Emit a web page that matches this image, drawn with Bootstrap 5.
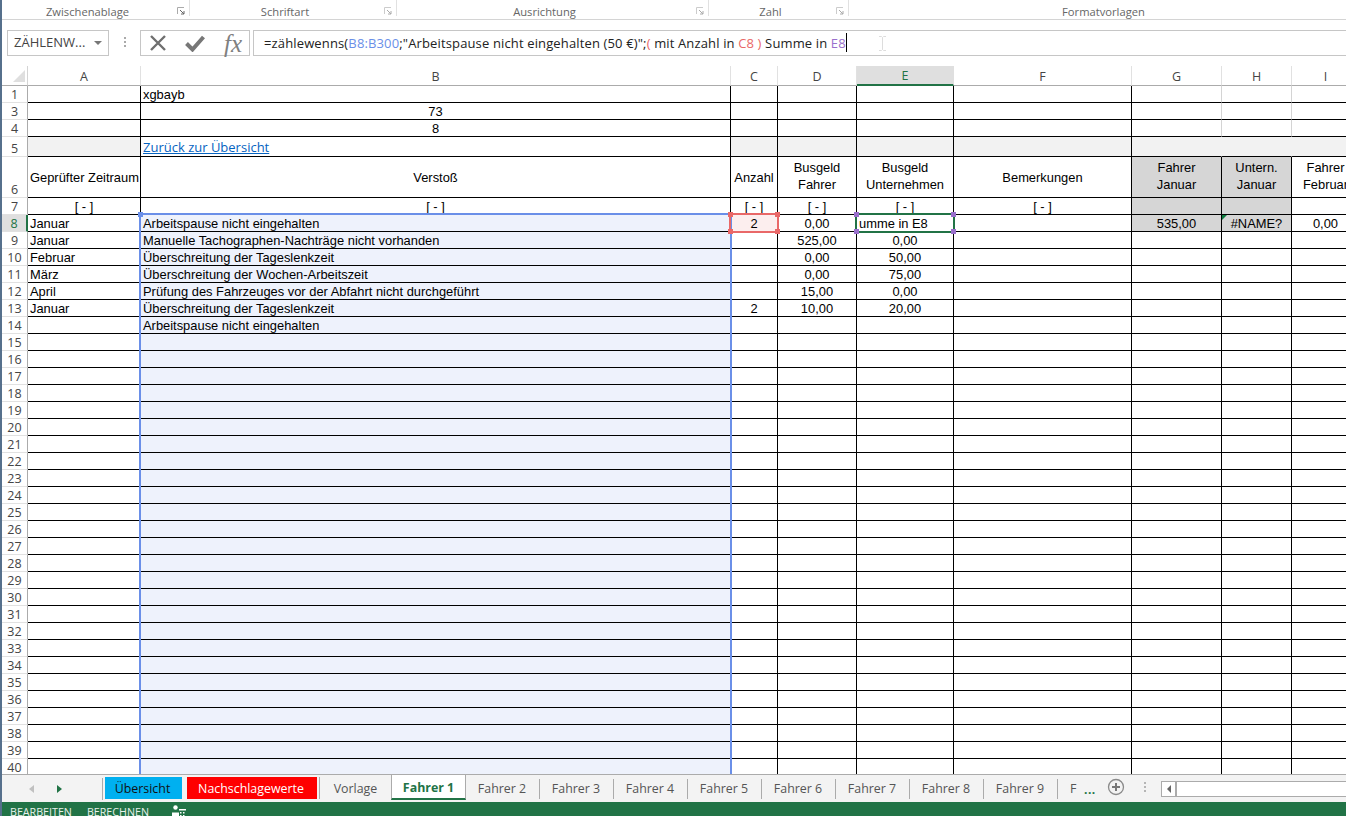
<!DOCTYPE html>
<html lang="de">
<head>
<meta charset="utf-8">
<title>Fahrer 1</title>
<link href="https://cdn.jsdelivr.net/npm/bootstrap@5.3.0/dist/css/bootstrap.min.css" rel="stylesheet">
<style>
html,body{height:816px;overflow:hidden;background:#fff}
.app-root{height:816px;border-left:2px solid #56708c;font-family:"Open Sans","Noto Sans",sans-serif;color:#444}
.ribbon-foot{height:20px;border-bottom:1px solid #d4d4d4;font-size:11.2px;color:#666;line-height:19px;flex:none}
.rib-group{position:relative;text-align:center;height:16px;line-height:24px;padding-right:16px}
.rib-group.sep{border-right:1px solid #e1e1e1}
.rib-launch{position:absolute;right:4px;top:7px;width:8px;height:8px;display:block}
.g1{width:188px}.g2{width:207px}.g3{width:312px}.g4{width:140px}.g5{width:496px;border:0;padding-right:0;padding-left:13px}
.formula-row{height:26px;margin-top:10px;flex:none;font-size:13px;position:relative}
.name-box{width:102px;margin-left:5px;border:1px solid #c6c6c6;padding-left:6px;color:#444}
.name-arrow{width:0;height:0;border-left:4px solid transparent;border-right:4px solid transparent;border-top:4px solid #777;margin-left:auto;margin-right:6px}
.fb-dots{width:31px;color:#aaa}
.fb-dots i{display:block;width:2px;height:2px;background:#aaa;margin:0 auto 2px}
.fb-btns{width:110px;border:1px solid #c6c6c6;padding:0 7px 0 8px}
.fx-txt{font-family:"Liberation Serif",serif;font-style:italic;font-size:25px;line-height:25px;color:#808080}
.fb-input{margin-left:3px;flex:1;border-top:1px solid #c6c6c6;border-bottom:1px solid #c6c6c6;border-left:1px solid #c6c6c6;padding-left:10px;color:#222;white-space:pre;font-size:13px;letter-spacing:.14px}
.f-blue{color:#6a8fe8}.f-red{color:#e96868}.f-purple{color:#9a70cc}
.caret-bar{display:inline-block;width:1px;height:19px;background:#000;vertical-align:-4px}
.ibeam{position:absolute;left:876px;top:6px}
.sheet-wrap{margin-top:10px;flex:1;position:relative;overflow:hidden;min-height:0}
.table.sheet-grid{table-layout:fixed;width:1358px;margin:0;border-collapse:separate;border-spacing:0;font-family:"Liberation Sans",Arial,sans-serif;font-size:12.9px;color:#000;--bs-table-color:#000}
.table.sheet-grid td,.table.sheet-grid th{padding:2px 2px 0;height:17px;line-height:14px;border:0;border-right:1px solid #000;border-bottom:1px solid #000;white-space:nowrap;overflow:hidden;vertical-align:middle;font-weight:400;box-shadow:none}
.table.sheet-grid td:nth-child(n+4){text-align:center}
.table.sheet-grid td.txt-c{text-align:center}
.table.sheet-grid tr>.rh{font-family:"Open Sans","Noto Sans",sans-serif;font-size:12.5px;color:#444;text-align:center;border-right:1px solid #ababab;border-bottom:1px solid #e1e1e1;padding:2px 0 0;vertical-align:bottom;line-height:14px}
.table.sheet-grid tr>.rh.active-row{background:#dfdfdf;color:#217346;border-right:2px solid #217346}
.table.sheet-grid thead th{height:20px;font-family:"Open Sans","Noto Sans",sans-serif;font-size:12.5px;color:#444;text-align:center;border-right:1px solid #e1e1e1;border-bottom:1px solid #ababab;padding:2px 0 0;vertical-align:middle}
.table.sheet-grid thead th.active-col{background:#dfdfdf;color:#217346;border-bottom:2px solid #217346;border-right-color:#dfdfdf}
.table.sheet-grid thead th.corner{padding:0;position:relative}
.table.sheet-grid thead th.to-a{border-right-color:#d4d4d4}
.corner svg{position:absolute;left:11px;top:4px}
.c-rh{width:26px}.c-a{width:113px}.c-b{width:590px}.c-c{width:47px}.c-d{width:79px}.c-e{width:97px}.c-f{width:178px}.c-g{width:90px}.c-h{width:70px}.c-i{width:68px}
.table.sheet-grid .lite{border-right-color:#d4d4d4}
.table.sheet-grid .plain{border-right-color:#f2f2f2}
.table.sheet-grid .gr5{background:#f2f2f2}
.table.sheet-grid .gr{background:#d6d6d6}
.table.sheet-grid .sel{background:#eef2fc}
.table.sheet-grid .red-cell{background:#fceeee}
.table.sheet-grid .tall-row{height:41px;line-height:17px;padding:0 2px}
.table.sheet-grid .two-line{padding:0 2px 2px}
.table.sheet-grid tr>.rh.tall-row{line-height:14px;padding:0}
.table.sheet-grid .mid-row{height:20px}
.table.sheet-grid .bot{vertical-align:bottom}
.sheet-link{color:#0563c1;text-decoration:underline;font-family:"Open Sans","Noto Sans",sans-serif;font-size:13px}
.err-mark{position:relative}
.err-mark::before{content:"";position:absolute;left:0;top:0;border-top:5px solid #107c41;border-right:5px solid transparent}
.range{position:absolute;pointer-events:none;border:2px solid}
.range-b{left:137px;top:147px;width:593px;height:600px;border-color:#6a8fe8}
.range-c{left:727px;top:147px;width:50px;height:20px;border-color:#e96868}
.range-e{left:853px;top:147px;width:100px;height:20px;border-color:#217346}
.grip{position:absolute;width:5px;height:5px}
.grip-blue{background:#6a8fe8;left:136px;top:146px}
.grip-red{background:#e96868}
.grip-pur{background:#9a70cc}
.tab-strip{height:28px;background:#f3f3f3;border-top:1px solid #ababab;flex:none;font-size:12.4px;position:relative;color:#555}
.tab-nav{width:101px;padding-left:27px;height:22px;border-right:1px solid #ababab;margin-top:3px;gap:23px}
.tri-l{width:0;height:0;border-top:4px solid transparent;border-bottom:4px solid transparent;border-right:5px solid #c0c0c0}
.tri-r{width:0;height:0;border-top:4px solid transparent;border-bottom:4px solid transparent;border-left:5px solid #217346}
.nav.sheet-tabs{flex-wrap:nowrap;align-items:flex-start;height:25px}
.nav.sheet-tabs .nav-link{padding:0;height:22px;margin-top:2px;line-height:23px;text-align:center;color:#555;font-size:12.4px}
.nav.sheet-tabs .tabw{width:74px;position:relative;padding-right:2px}
.nav.sheet-tabs .tabw::after{content:"";position:absolute;right:0;top:2px;height:20px;width:1px;background:#ababab}
.nav.sheet-tabs .tab-blue{width:77px;margin-left:2px;background:#00b0f0;color:#111;padding-right:2px}
.nav.sheet-tabs .tab-red{width:130px;margin-left:5px;background:#f00;color:#fff;padding-right:2px}
.nav.sheet-tabs .tab-vor{width:72px;margin-left:2px;border-left:1px solid #ababab}
.nav.sheet-tabs .tab-on{width:75px;margin-top:0;height:25px;background:#fff;color:#217346;font-weight:700;border-left:1px solid #ababab;border-right:1px solid #ababab;border-bottom:2px solid #217346;line-height:26px}
.nav.sheet-tabs .tab-on::after{display:none}
.nav.sheet-tabs .tab-cut{width:24px;text-align:left;padding-left:12px;overflow:hidden}
.more-dots{color:#217346;font-weight:700;font-size:12px;width:24px;margin-left:2px;line-height:22px;height:22px;letter-spacing:.5px}
.add-sheet{margin-left:-1px;margin-top:3px;flex:none}
.strip-dots{width:3px;margin-left:19px;margin-top:7px}
.strip-dots i{display:block;width:2px;height:2px;background:#b5b5b5;margin-bottom:2px}
.scroll-bar{margin-left:14px;margin-top:6px;flex:1;height:16px;border:1px solid #ababab;border-right:0;background:#fff}
.scroll-arrow{width:15px;height:14px;border-right:2px solid #ababab;display:flex;align-items:center;justify-content:center}
.scroll-arrow i{width:0;height:0;border-top:4px solid transparent;border-bottom:4px solid transparent;border-right:4px solid #666}
.status-line{height:14px;background:#217346;color:#e9f1ec;font-size:10.7px;flex:none;padding-left:8px;gap:15px;line-height:14px;padding-top:3px;overflow:hidden}
</style>
</head>
<body>
<div class="app-root d-flex flex-column position-relative">
  <div class="ribbon-foot d-flex">
    <div class="rib-group sep g1">Zwischenablage<svg class="rib-launch" viewBox="0 0 8 8"><path d="M0.5 7V.5H7" fill="none" stroke="#aaa"/><path d="M3 3l4 4M7 4v3H4" fill="none" stroke="#666"/></svg></div>
    <div class="rib-group sep g2">Schriftart<svg class="rib-launch" viewBox="0 0 8 8"><path d="M0.5 7V.5H7" fill="none" stroke="#ccc"/><path d="M3 3l4 4M7 4v3H4" fill="none" stroke="#aaa"/></svg></div>
    <div class="rib-group sep g3">Ausrichtung<svg class="rib-launch" viewBox="0 0 8 8"><path d="M0.5 7V.5H7" fill="none" stroke="#ccc"/><path d="M3 3l4 4M7 4v3H4" fill="none" stroke="#aaa"/></svg></div>
    <div class="rib-group sep g4">Zahl<svg class="rib-launch" viewBox="0 0 8 8"><path d="M0.5 7V.5H7" fill="none" stroke="#ccc"/><path d="M3 3l4 4M7 4v3H4" fill="none" stroke="#aaa"/></svg></div>
    <div class="rib-group g5">Formatvorlagen</div>
  </div>
  <div class="formula-row d-flex">
    <div class="name-box d-flex align-items-center">ZÄHLENW...<span class="name-arrow"></span></div>
    <div class="fb-dots d-flex flex-column justify-content-center"><i></i><i></i><i></i></div>
    <div class="fb-btns d-flex align-items-center justify-content-between">
      <svg width="18" height="18" viewBox="0 0 18 18"><path d="M2 2l14 14M16 2L2 16" stroke="#6f6f6f" stroke-width="2.4" fill="none"/></svg>
      <svg width="20" height="18" viewBox="0 0 20 18"><path d="M1.5 9.5l6 6L18.5 3" stroke="#777" stroke-width="4" fill="none"/></svg>
      <span class="fx-txt">fx</span>
    </div>
    <div class="fb-input d-flex align-items-center"><span>=zählewenns(<span class="f-blue">B8:B300</span>;"Arbeitspause nicht eingehalten (50 €)";<span class="f-red">(</span> mit Anzahl in <span class="f-red">C8 )</span> Summe in <span class="f-purple">E8</span><span class="caret-bar"></span></span></div>
    <svg class="ibeam" width="9" height="15" viewBox="0 0 9 15"><path d="M1 .5h2.5L4.5 1.5 5.5.5H8M4.5 1.5v12M1 14.5h2.5l1-1 1 1H8" fill="none" stroke="#ddd"/></svg>
  </div>
  <div class="sheet-wrap">
    <table class="table sheet-grid">
      <colgroup><col class="c-rh"><col class="c-a"><col class="c-b"><col class="c-c"><col class="c-d"><col class="c-e"><col class="c-f"><col class="c-g"><col class="c-h"><col class="c-i"></colgroup>
      <thead><tr><th class="corner to-a"><svg width="12" height="12" viewBox="0 0 12 12"><path d="M12 0V12H0Z" fill="#dfdfdf"/></svg></th><th>A</th><th>B</th><th>C</th><th>D</th><th class="active-col">E</th><th>F</th><th>G</th><th>H</th><th>I</th></tr></thead>
      <tbody>
      <tr><td class="rh">1</td><td></td><td>xgbayb</td><td></td><td></td><td></td><td></td><td class="lite"></td><td class="lite"></td><td></td></tr>
      <tr><td class="rh">3</td><td></td><td class="txt-c">73</td><td></td><td></td><td></td><td></td><td class="lite"></td><td class="lite"></td><td></td></tr>
      <tr><td class="rh">4</td><td></td><td class="txt-c">8</td><td></td><td></td><td></td><td></td><td class="lite"></td><td class="lite"></td><td></td></tr>
      <tr><td class="rh mid-row">5</td><td class="gr5 mid-row"></td><td class="mid-row"><a class="sheet-link" href="#">Zurück zur Übersicht</a></td><td class="gr5 mid-row"></td><td class="gr5 mid-row"></td><td class="gr5 mid-row"></td><td class="gr5 mid-row"></td><td class="gr5 mid-row plain"></td><td class="gr5 mid-row plain"></td><td class="gr5 mid-row"></td></tr>
      <tr><td class="rh tall-row">6</td><td class="tall-row">Geprüfter Zeitraum</td><td class="tall-row txt-c">Verstoß</td><td class="tall-row">Anzahl</td><td class="tall-row two-line">Busgeld<br>Fahrer</td><td class="tall-row two-line">Busgeld<br>Unternehmen</td><td class="tall-row">Bemerkungen</td><td class="tall-row two-line gr">Fahrer<br>Januar</td><td class="tall-row two-line gr">Untern.<br>Januar</td><td class="tall-row two-line">Fahrer<br>Februar</td></tr>
      <tr><td class="rh">7</td><td class="txt-c bot">[ - ]</td><td class="txt-c bot">[ - ]</td><td class="bot">[ - ]</td><td class="bot">[ - ]</td><td class="bot">[ - ]</td><td class="bot">[ - ]</td><td class="gr"></td><td class="gr"></td><td></td></tr>
      <tr><td class="rh active-row">8</td><td>Januar</td><td class="sel">Arbeitspause nicht eingehalten</td><td class="red-cell">2</td><td>0,00</td><td class="text-start">umme in E8</td><td></td><td class="gr">535,00</td><td class="gr err-mark">#NAME?</td><td>0,00</td></tr>
      <tr><td class="rh">9</td><td>Januar</td><td class="sel">Manuelle Tachographen-Nachträge nicht vorhanden</td><td></td><td>525,00</td><td>0,00</td><td></td><td></td><td></td><td></td></tr>
      <tr><td class="rh">10</td><td>Februar</td><td class="sel">Überschreitung der Tageslenkzeit</td><td></td><td>0,00</td><td>50,00</td><td></td><td></td><td></td><td></td></tr>
      <tr><td class="rh">11</td><td>März</td><td class="sel">Überschreitung der Wochen-Arbeitszeit</td><td></td><td>0,00</td><td>75,00</td><td></td><td></td><td></td><td></td></tr>
      <tr><td class="rh">12</td><td>April</td><td class="sel">Prüfung des Fahrzeuges vor der Abfahrt nicht durchgeführt</td><td></td><td>15,00</td><td>0,00</td><td></td><td></td><td></td><td></td></tr>
      <tr><td class="rh">13</td><td>Januar</td><td class="sel">Überschreitung der Tageslenkzeit</td><td>2</td><td>10,00</td><td>20,00</td><td></td><td></td><td></td><td></td></tr>
      <tr><td class="rh">14</td><td></td><td class="sel">Arbeitspause nicht eingehalten</td><td></td><td></td><td></td><td></td><td></td><td></td><td></td></tr>
      <tr><td class="rh">15</td><td></td><td class="sel"></td><td></td><td></td><td></td><td></td><td></td><td></td><td></td></tr>
      <tr><td class="rh">16</td><td></td><td class="sel"></td><td></td><td></td><td></td><td></td><td></td><td></td><td></td></tr>
      <tr><td class="rh">17</td><td></td><td class="sel"></td><td></td><td></td><td></td><td></td><td></td><td></td><td></td></tr>
      <tr><td class="rh">18</td><td></td><td class="sel"></td><td></td><td></td><td></td><td></td><td></td><td></td><td></td></tr>
      <tr><td class="rh">19</td><td></td><td class="sel"></td><td></td><td></td><td></td><td></td><td></td><td></td><td></td></tr>
      <tr><td class="rh">20</td><td></td><td class="sel"></td><td></td><td></td><td></td><td></td><td></td><td></td><td></td></tr>
      <tr><td class="rh">21</td><td></td><td class="sel"></td><td></td><td></td><td></td><td></td><td></td><td></td><td></td></tr>
      <tr><td class="rh">22</td><td></td><td class="sel"></td><td></td><td></td><td></td><td></td><td></td><td></td><td></td></tr>
      <tr><td class="rh">23</td><td></td><td class="sel"></td><td></td><td></td><td></td><td></td><td></td><td></td><td></td></tr>
      <tr><td class="rh">24</td><td></td><td class="sel"></td><td></td><td></td><td></td><td></td><td></td><td></td><td></td></tr>
      <tr><td class="rh">25</td><td></td><td class="sel"></td><td></td><td></td><td></td><td></td><td></td><td></td><td></td></tr>
      <tr><td class="rh">26</td><td></td><td class="sel"></td><td></td><td></td><td></td><td></td><td></td><td></td><td></td></tr>
      <tr><td class="rh">27</td><td></td><td class="sel"></td><td></td><td></td><td></td><td></td><td></td><td></td><td></td></tr>
      <tr><td class="rh">28</td><td></td><td class="sel"></td><td></td><td></td><td></td><td></td><td></td><td></td><td></td></tr>
      <tr><td class="rh">29</td><td></td><td class="sel"></td><td></td><td></td><td></td><td></td><td></td><td></td><td></td></tr>
      <tr><td class="rh">30</td><td></td><td class="sel"></td><td></td><td></td><td></td><td></td><td></td><td></td><td></td></tr>
      <tr><td class="rh">31</td><td></td><td class="sel"></td><td></td><td></td><td></td><td></td><td></td><td></td><td></td></tr>
      <tr><td class="rh">32</td><td></td><td class="sel"></td><td></td><td></td><td></td><td></td><td></td><td></td><td></td></tr>
      <tr><td class="rh">33</td><td></td><td class="sel"></td><td></td><td></td><td></td><td></td><td></td><td></td><td></td></tr>
      <tr><td class="rh">34</td><td></td><td class="sel"></td><td></td><td></td><td></td><td></td><td></td><td></td><td></td></tr>
      <tr><td class="rh">35</td><td></td><td class="sel"></td><td></td><td></td><td></td><td></td><td></td><td></td><td></td></tr>
      <tr><td class="rh">36</td><td></td><td class="sel"></td><td></td><td></td><td></td><td></td><td></td><td></td><td></td></tr>
      <tr><td class="rh">37</td><td></td><td class="sel"></td><td></td><td></td><td></td><td></td><td></td><td></td><td></td></tr>
      <tr><td class="rh">38</td><td></td><td class="sel"></td><td></td><td></td><td></td><td></td><td></td><td></td><td></td></tr>
      <tr><td class="rh">39</td><td></td><td class="sel"></td><td></td><td></td><td></td><td></td><td></td><td></td><td></td></tr>
      <tr><td class="rh">40</td><td></td><td class="sel"></td><td></td><td></td><td></td><td></td><td></td><td></td><td></td></tr>
      </tbody>
    </table>
    <div class="range range-b"></div>
    <div class="range range-c"></div>
    <div class="range range-e"></div>
    <div class="grip grip-blue"></div>
    <div class="grip grip-red" style="left:726px;top:146px"></div>
    <div class="grip grip-red" style="left:773px;top:146px"></div>
    <div class="grip grip-red" style="left:726px;top:163px"></div>
    <div class="grip grip-red" style="left:773px;top:163px"></div>
    <div class="grip grip-pur" style="left:852px;top:146px"></div>
    <div class="grip grip-pur" style="left:949px;top:146px"></div>
    <div class="grip grip-pur" style="left:852px;top:163px"></div>
    <div class="grip grip-pur" style="left:949px;top:163px"></div>
  </div>
  <div class="tab-strip d-flex">
    <div class="tab-nav d-flex align-items-center"><span class="tri-l"></span><span class="tri-r"></span></div>
    <ul class="nav sheet-tabs">
      <li class="nav-item"><a class="nav-link tab-blue" href="#">Übersicht</a></li>
      <li class="nav-item"><a class="nav-link tab-red" href="#">Nachschlagewerte</a></li>
      <li class="nav-item"><a class="nav-link tab-vor" href="#">Vorlage</a></li>
      <li class="nav-item"><a class="nav-link tab-on" href="#">Fahrer 1</a></li>
      <li class="nav-item"><a class="nav-link tabw" href="#">Fahrer 2</a></li>
      <li class="nav-item"><a class="nav-link tabw" href="#">Fahrer 3</a></li>
      <li class="nav-item"><a class="nav-link tabw" href="#">Fahrer 4</a></li>
      <li class="nav-item"><a class="nav-link tabw" href="#">Fahrer 5</a></li>
      <li class="nav-item"><a class="nav-link tabw" href="#">Fahrer 6</a></li>
      <li class="nav-item"><a class="nav-link tabw" href="#">Fahrer 7</a></li>
      <li class="nav-item"><a class="nav-link tabw" href="#">Fahrer 8</a></li>
      <li class="nav-item"><a class="nav-link tabw" href="#">Fahrer 9</a></li>
      <li class="nav-item"><a class="nav-link tab-cut" href="#">F</a></li>
    </ul>
    <div class="more-dots mt-1">...</div>
    <svg class="add-sheet" width="18" height="18" viewBox="0 0 18 18"><circle cx="9" cy="9" r="7.5" fill="none" stroke="#8a8a8a" stroke-width="1.3"/><path d="M9 5v8M5 9h8" stroke="#777" stroke-width="2"/></svg>
    <div class="strip-dots"><i></i><i></i><i></i></div>
    <div class="scroll-bar"><div class="scroll-arrow"><i></i></div></div>
  </div>
  <div class="status-line d-flex">
    <span>BEARBEITEN</span><span>BERECHNEN</span>
    <svg class="ms-2" width="14" height="12" viewBox="0 0 14 12"><circle cx="3.5" cy="2.5" r="2.2" fill="#fff"/><path d="M0 7.5h7v4H0z" fill="#fff"/><path d="M7 4h7v1.5H7zM8 7h1.5v1.5H8zM11 7h1.5v1.5H11zM8 10h1.5v1.5H8zM11 10h1.5v1.5H11z" fill="#fff"/></svg>
  </div>
</div>
</body>
</html>
